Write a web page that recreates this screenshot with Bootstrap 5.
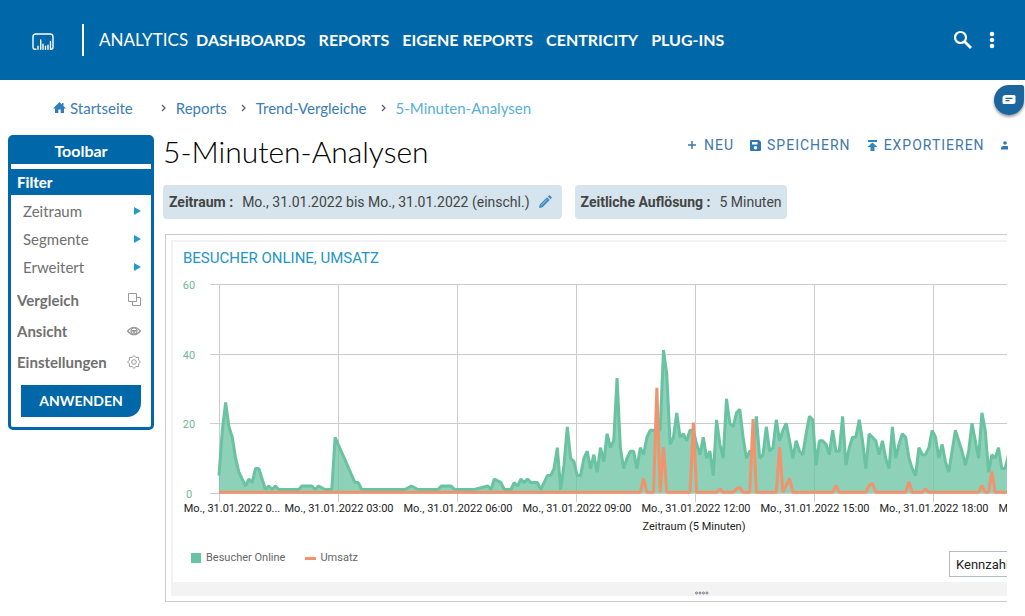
<!DOCTYPE html>
<html lang="de">
<head>
<meta charset="utf-8">
<meta name="viewport" content="width=device-width, initial-scale=1">
<title>5-Minuten-Analysen</title>
<link href="https://cdn.jsdelivr.net/npm/bootstrap@5.3.0/dist/css/bootstrap.min.css" rel="stylesheet">
<style>
:root { --brand: #0067a8; --link: #3b7db5; }
body { font-family: Roboto, sans-serif; font-size: 14px; line-height: 20px; color: #444; overflow-x: hidden; }
a { text-decoration: none; }
svg { display: block; flex: none; }
.heading-font { font-family: Lato, sans-serif; }
.topbar { background: var(--brand); height: 80px; padding: 0 23px 0 32px; }
.topbar a { color: #fff; font-size: 16px; font-weight: 700; }
.topbar .product { font-weight: 400; font-size: 17px; border-left: 2px solid #fff; line-height: 32px; padding-left: 15px; margin-left: 27px; margin-right: 8px; }
.topbar .menu { gap: 13px; }
.icon-btn { border: 0; background: none; padding: 0; color: #fff; }
.search { margin-right: 13px; }
.crumbs { padding: 18px 0 0 53px; font-size: 15px; margin: 0; }
.crumbs li { display: flex; align-items: center; }
.crumbs a { color: var(--link); }
.crumbs .here { color: #58b0d6; }
.crumbs svg.sep { margin: 0 9px 0 14px; }
.crumbs li:nth-child(2) svg.sep { margin-left: 28px; }
.page { padding: 17px 18px 14px 8px; gap: 9px; }
.tools { width: 146px; flex: none; border: 3px solid var(--brand); border-radius: 5px; color: #666; font-size: 15px; }
.tools h2 { font-size: 16px; line-height: 26px; font-weight: 700; color: #fff; background: var(--brand); text-align: center; margin: 0 0 5px; }
.tools h3 { font-size: 15px; line-height: 26px; font-weight: 900; color: #fff; background: var(--brand); margin: 0 0 2px; padding-left: 6px; }
.tools a { display: flex; align-items: center; justify-content: space-between; color: #707070; }
.tools .sub { height: 28px; padding: 0 10px 0 12px; }
.tools .main { height: 31px; padding: 0 10px 0 6px; font-weight: 700; }
.tools .sub + .main { margin-top: 3px; }
.tools .apply { display: block; width: 120px; height: 32px; margin: 8px 10px 10px; border: 0; padding: 0; background: var(--brand); color: #fff; font-weight: 700; font-size: 14px; border-radius: 0 0 14px 0; }
.content { min-width: 0; }
.content h1 { font-size: 30px; line-height: 32px; font-weight: 300; color: #000; margin: 0 0 18px; }
.actions { gap: 16px; height: 20px; width: 321px; margin-right: -1px; overflow: hidden; }
.actions button { display: flex; align-items: center; flex: none; gap: 6px; border: 0; padding: 0; background: none; color: #3f78ab; letter-spacing: 1px; line-height: 20px; }
.info-row { gap: 13px; }
.info { height: 34px; background: #d5e4ed; border-radius: 4px; padding: 0 5px 0 6px; }
.info b { margin-right: 9px; font-weight: 700; }
.panel { margin: 15px 0 0 2px; border: 1px solid #ccc; border-right: 0; padding: 5px 0 5px 5px; overflow: hidden; }
.panel-in { width: 1061px; border: 2px solid #f2f2f2; border-bottom: 0; }
.panel h4 { font-size: 15px; line-height: 32px; color: #2495c6; font-weight: 400; margin: 0; padding-left: 10px; }
.legend { height: 44px; padding: 0 59px 4px 18px; font-size: 11px; color: #666; }
.legend select { width: 222px; height: 26px; border: 1px solid #b5bdc2; background: #fff; font-size: 13px; color: #222; padding: 0 2px; margin-top: 12px; }
.swatch { width: 10px; height: 10px; background: #69c3a2; margin-right: 5px; }
.dash { width: 11px; height: 3px; background: #f1936d; margin: 0 4px 0 20px; }
.grip { height: 14px; background: #f3f3f3; padding-top: 9px; }
.grid { stroke: #ccc; fill: none; shape-rendering: crispEdges; }
.ylab { font-size: 11px; fill: #71b898; text-anchor: middle; }
.xlab { font-size: 11px; fill: #222; text-anchor: middle; }
.chat { position: fixed; right: 1px; top: 85px; width: 30px; height: 30px; border: 0; padding: 0; background: #1c669f; border-radius: 15px 2px 15px 15px; box-shadow: 0 2px 3px #0006; }
</style>
</head>
<body>
<header class="topbar d-flex align-items-center heading-font">
  <a href="#" aria-label="Start"><svg class="mt-1" width="23" height="18" viewBox="0 0 23 18" fill="none" stroke="#fff" stroke-width="1.4" stroke-linecap="round"><path d="M4 16.300H3c-1.500 0-2-1-2-2V4c0-2 1-3 3-3h14c2 0 3 1 3 3v10.300c0 1-.6 2-2 2h-.500V8.500M6 16.300v-3M8.700 16.300V7M11 16.300v-5M13.500 16.300v-3M16 16.300v-4"/></svg></a>
  <a href="#" class="product">ANALYTICS</a>
  <nav class="menu d-flex flex-grow-1">
    <a href="#">DASHBOARDS</a><a href="#">REPORTS</a><a href="#">EIGENE REPORTS</a><a href="#">CENTRICITY</a><a href="#">PLUG-INS</a>
  </nav>
  <button class="icon-btn search" aria-label="Suche"><svg width="20" height="20" viewBox="0 0 20 20" fill="none" stroke="#fff" stroke-width="2.200"><circle cx="7.500" cy="7.500" r="5.500"/><path d="M11.500 11.500l6.500 6.500" stroke-width="2.800"/></svg></button>
  <button class="icon-btn" aria-label="Mehr"><svg width="16" height="18" fill="#fff"><circle cx="6" cy="3" r="2.300"/><circle cx="6" cy="9" r="2.300"/><circle cx="6" cy="15" r="2.300"/></svg></button>
</header>

<nav aria-label="Pfad">
  <ol class="crumbs list-unstyled d-flex heading-font">
    <li><svg class="me-1" width="13" height="12" viewBox="0 0 13 12" fill="#2f7fb8"><path d="M6.500 0L0 6.500h2V11h3.300V7.500h2.400V11H11V6.500h2L10.500 4V1H9v1.500z"/></svg><a href="#">Startseite</a></li>
    <li><svg class="sep" width="6" height="8" fill="none" stroke="#557" stroke-width="1.200"><path d="M1 1l3 3-3 3"/></svg><a href="#">Reports</a></li>
    <li><svg class="sep" width="6" height="8" fill="none" stroke="#557" stroke-width="1.200"><path d="M1 1l3 3-3 3"/></svg><a href="#">Trend-Vergleiche</a></li>
    <li><svg class="sep" width="6" height="8" fill="none" stroke="#557" stroke-width="1.200"><path d="M1 1l3 3-3 3"/></svg><a href="#" class="here">5-Minuten-Analysen</a></li>
  </ol>
</nav>

<div class="page d-flex align-items-start">
  <aside class="tools heading-font">
    <h2>Toolbar</h2>
    <h3>Filter</h3>
    <a href="#" class="sub">Zeitraum <svg width="8" height="8" fill="#1f9bd0"><path d="M1 0l7 4-7 4z"/></svg></a>
    <a href="#" class="sub">Segmente <svg width="8" height="8" fill="#1f9bd0"><path d="M1 0l7 4-7 4z"/></svg></a>
    <a href="#" class="sub">Erweitert <svg width="8" height="8" fill="#1f9bd0"><path d="M1 0l7 4-7 4z"/></svg></a>
    <a href="#" class="main">Vergleich <svg width="13" height="13" fill="none" stroke="#999"><path d="M.5.5h8v8h-8zM8.500 4.500h4v8h-8v-4"/></svg></a>
    <a href="#" class="main">Ansicht <svg width="14" height="10" fill="none" stroke="#999" stroke-width="1.200"><path d="M.5 5Q7-2.500 13.500 5 7 12.500.5 5z"/><circle cx="7" cy="5" r="3"/><path d="M5.500 4.500h3L7 6.500z" fill="#999"/></svg></a>
    <a href="#" class="main">Einstellungen <svg width="14" height="14" viewBox="-7 -7 14 14" fill="none" stroke="#999"><path d="M0-6.500L1.700-4.600 4.600-4.600 4.600-1.700 6.500 0 4.600 1.700 4.600 4.600 1.700 4.600 0 6.500-1.700 4.600-4.600 4.600-4.600 1.700-6.500 0-4.600-1.700-4.600-4.600-1.700-4.600z"/><circle r="2.300"/></svg></a>
    <button class="apply">ANWENDEN</button>
  </aside>

  <main class="content flex-grow-1">
    <div class="d-flex justify-content-between">
      <h1 class="heading-font">5-Minuten-Analysen</h1>
      <div class="actions d-flex">
        <button><svg width="11" height="10" stroke="#3f78ab" stroke-width="1.500"><path d="M5 1v8M1 5h8"/></svg>NEU</button>
        <button><svg width="11" height="11" fill="#2f78b5" fill-rule="evenodd"><path d="M0 1q0-1 1-1h8l2 2v8q0 1-1 1H1q-1 0-1-1zM2 2v2.500h5.500V2zM5.500 6a1.700 1.700 0 100 3.500 1.700 1.700 0 000-3.500z"/></svg>SPEICHERN</button>
        <button><svg width="11" height="11" fill="#2f86bd"><path d="M1 0h9v2H1zM5.500 2.500L10.500 7H7.500v4h-4V7h-3z"/></svg>EXPORTIEREN</button>
        <button aria-label="Teilen"><svg width="11" height="9" fill="#2f78b5"><circle cx="4" cy="2" r="1.800"/><path d="M0 8.500V7q0-2 2.500-2h3Q8 5 8 7v1.500z"/></svg></button>
      </div>
    </div>
    <div class="d-flex info-row">
      <div class="info d-flex align-items-center"><b>Zeitraum :</b>Mo., 31.01.2022 bis Mo., 31.01.2022 (einschl.)
        <svg class="ms-2" width="19" height="14" viewBox="2 0 19 14"><path d="M3 13l.8-3.500L11 2.300l2.700 2.700-7.200 7.200zM11.800 1.500l1-1q.6-.5 1.200 0L15.500 2q.6.600 0 1.200l-1 1z" fill="#4289c4"/><path d="M5 10.500l6-6" stroke="#a8cbe4"/></svg></div>
      <div class="info d-flex align-items-center"><b>Zeitliche Auflösung :</b>5 Minuten</div>
    </div>
    <section class="panel">
      <div class="panel-in">
        <h4>BESUCHER ONLINE, UMSATZ</h4>
        <svg id="chart" width="1050" height="264" role="img" aria-label="Besucher Online und Umsatz">
          <g id="axes"></g>
          <path id="visitors-area" fill="#69c3a2" fill-opacity=".76"/>
          <path id="visitors" fill="none" stroke="#69c3a2" stroke-width="3" stroke-linejoin="bevel"/>
          <path id="revenue" fill="none" stroke="#f1936d" stroke-width="3" stroke-linejoin="bevel"/>
          <text class="xlab" x="521" y="256">Zeitraum (5 Minuten)</text>
        </svg>
        <div class="legend d-flex align-items-center">
          <span class="swatch"></span><span>Besucher Online</span>
          <span class="dash"></span><span>Umsatz</span>
          <select class="ms-auto" aria-label="Kennzahl"><option>Kennzahlen auswählen</option></select>
        </div>
        <div class="grip"><svg class="mx-auto" width="14" height="4" fill="none" stroke="#778"><circle cx="1.500" cy="2" r="1"/><circle cx="5" cy="2" r="1"/><circle cx="8.500" cy="2" r="1"/><circle cx="12" cy="2" r="1"/></svg></div>
      </div>
    </section>
  </main>
</div>

<button class="chat" aria-label="Chat"><svg class="mx-auto" width="14" height="12" fill="none"><path d="M4 1h8q1.500 0 1.500 1.500v5Q13.500 10 11 10H2q-1.500 0-1.500-1.500V4Q.5 1 4 1z" fill="#fff"/><path d="M3.500 4.300h7M3.500 6.700h4" stroke="#1c669f" stroke-width="1.300"/></svg></button>

<script src="https://cdn.jsdelivr.net/npm/bootstrap@5.3.0/dist/js/bootstrap.bundle.min.js"></script>
<script>
// Series as [five-minute index, value]; gaps are joined by straight lines.
const visitors = [[0,5],[1,18],[2,26],[3,19],[4,16],[5,10],[6,6],[7,4],[8,2],[9,4],[10,3],[11,7],[12,7],[13,4],[14,1],[15,2],[16,1],[17,2],[18,1],[24,1],[25,2],[28,2],[29,1],[30,2],[32,1],[34,1],[35,16],[41,3],[42,3],[43,1],[56,1],[58,2],[60,1],[66,1],[67,2],[70,2],[71,1],[77,1],[81,2],[82,1],[83,4],[85,3],[86,1],[88,1],[89,3],[90,2],[91,4],[92,3],[93,4],[94,3],[96,3],[97,1],[99,5],[100,5],[101,7],[102,13],[103,1],[104,8],[105,19],[106,10],[107,9],[108,5],[109,5],[110,10],[111,12],[112,7],[113,11],[114,6],[115,13],[116,9],[117,17],[118,13],[119,15],[120,33],[121,13],[122,7],[123,10],[124,12],[125,12],[126,7],[127,13],[128,11],[129,16],[130,18],[133,18],[134,41],[135,34],[136,14],[137,16],[138,23],[139,16],[140,17],[141,15],[142,18],[143,18],[144,14],[145,11],[146,16],[147,10],[148,12],[149,5],[150,21],[151,14],[152,10],[153,27],[154,20],[155,19],[156,23],[157,24],[158,16],[159,10],[160,12],[161,12],[162,22],[163,10],[164,11],[165,19],[166,12],[167,13],[168,21],[169,15],[170,18],[171,20],[172,15],[173,10],[174,15],[175,12],[176,11],[177,17],[178,22],[179,21],[180,8],[181,15],[182,15],[183,14],[184,11],[185,18],[186,12],[187,12],[188,22],[189,8],[190,13],[191,16],[192,16],[193,21],[194,15],[195,7],[196,17],[197,16],[198,15],[199,11],[200,15],[201,10],[202,7],[203,19],[204,10],[205,14],[206,17],[207,16],[208,10],[209,7],[210,5],[211,13],[212,11],[213,11],[214,13],[215,18],[216,16],[217,10],[218,14],[219,9],[220,6],[221,12],[222,18],[223,15],[224,12],[225,8],[226,12],[227,20],[228,15],[229,10],[230,23],[231,18],[232,6],[233,11],[234,10],[235,13],[236,7],[237,7],[238,11],[250,9],[287,6]];
const revenue = [[0,0],[127,0],[128,4],[129,0],[131,0],[132,30],[133,0],[134,13],[135,0],[142,0],[143,20],[144,0],[150,0],[151,1],[152,0],[155,0],[156,1],[157,1.5],[158,0],[160,0],[161,21],[162,0],[168,0],[169,13],[170,0],[172,4],[173,0],[185,0],[186,2],[187,0],[195,0],[196,2],[197,2.5],[198,0],[207,0],[208,3],[209,0],[212,0],[213,1],[214,0],[229,0],[230,2],[231,0],[232,0],[233,6],[234,0],[287,0]];
const left = 46, base = 219, hour = 119 / 3, unit = 209 / 60;
// The day's 288 samples are spread evenly over the full plot width.
const step = 24 * hour / 287;
const line = s => 'M' + s.map(([i, v]) => (left + i * step) + ' ' + (base - v * unit)).join('L');
document.getElementById('visitors').setAttribute('d', line(visitors));
document.getElementById('visitors-area').setAttribute('d', line(visitors) + `V${base}H${left}Z`);
document.getElementById('revenue').setAttribute('d', line(revenue.map(([i, v]) => [i, v + 0.2])));
let out = '';
for (const v of [0, 20, 40, 60]) {
  const y = Math.round(base - v * unit) + 0.5;
  out += `<path class="grid" d="M37 ${y}H998"/><text class="ylab" x="16" y="${y + 4.5}">${v}</text>`;
}
for (let h = 0; h <= 21; h += 3) {
  const x = Math.round(left + h * hour);
  const label = h ? 'Mo., 31.01.2022 ' + String(h).padStart(2, '0') + ':00' : 'Mo., 31.01.2022 0...';
  out += `<path class="grid" d="M${x + 0.5} 10V228"/><text class="xlab" x="${h ? x + 1 : x + 13}" y="238">${label}</text>`;
}
document.getElementById('axes').innerHTML = out;
</script>
</body>
</html>
